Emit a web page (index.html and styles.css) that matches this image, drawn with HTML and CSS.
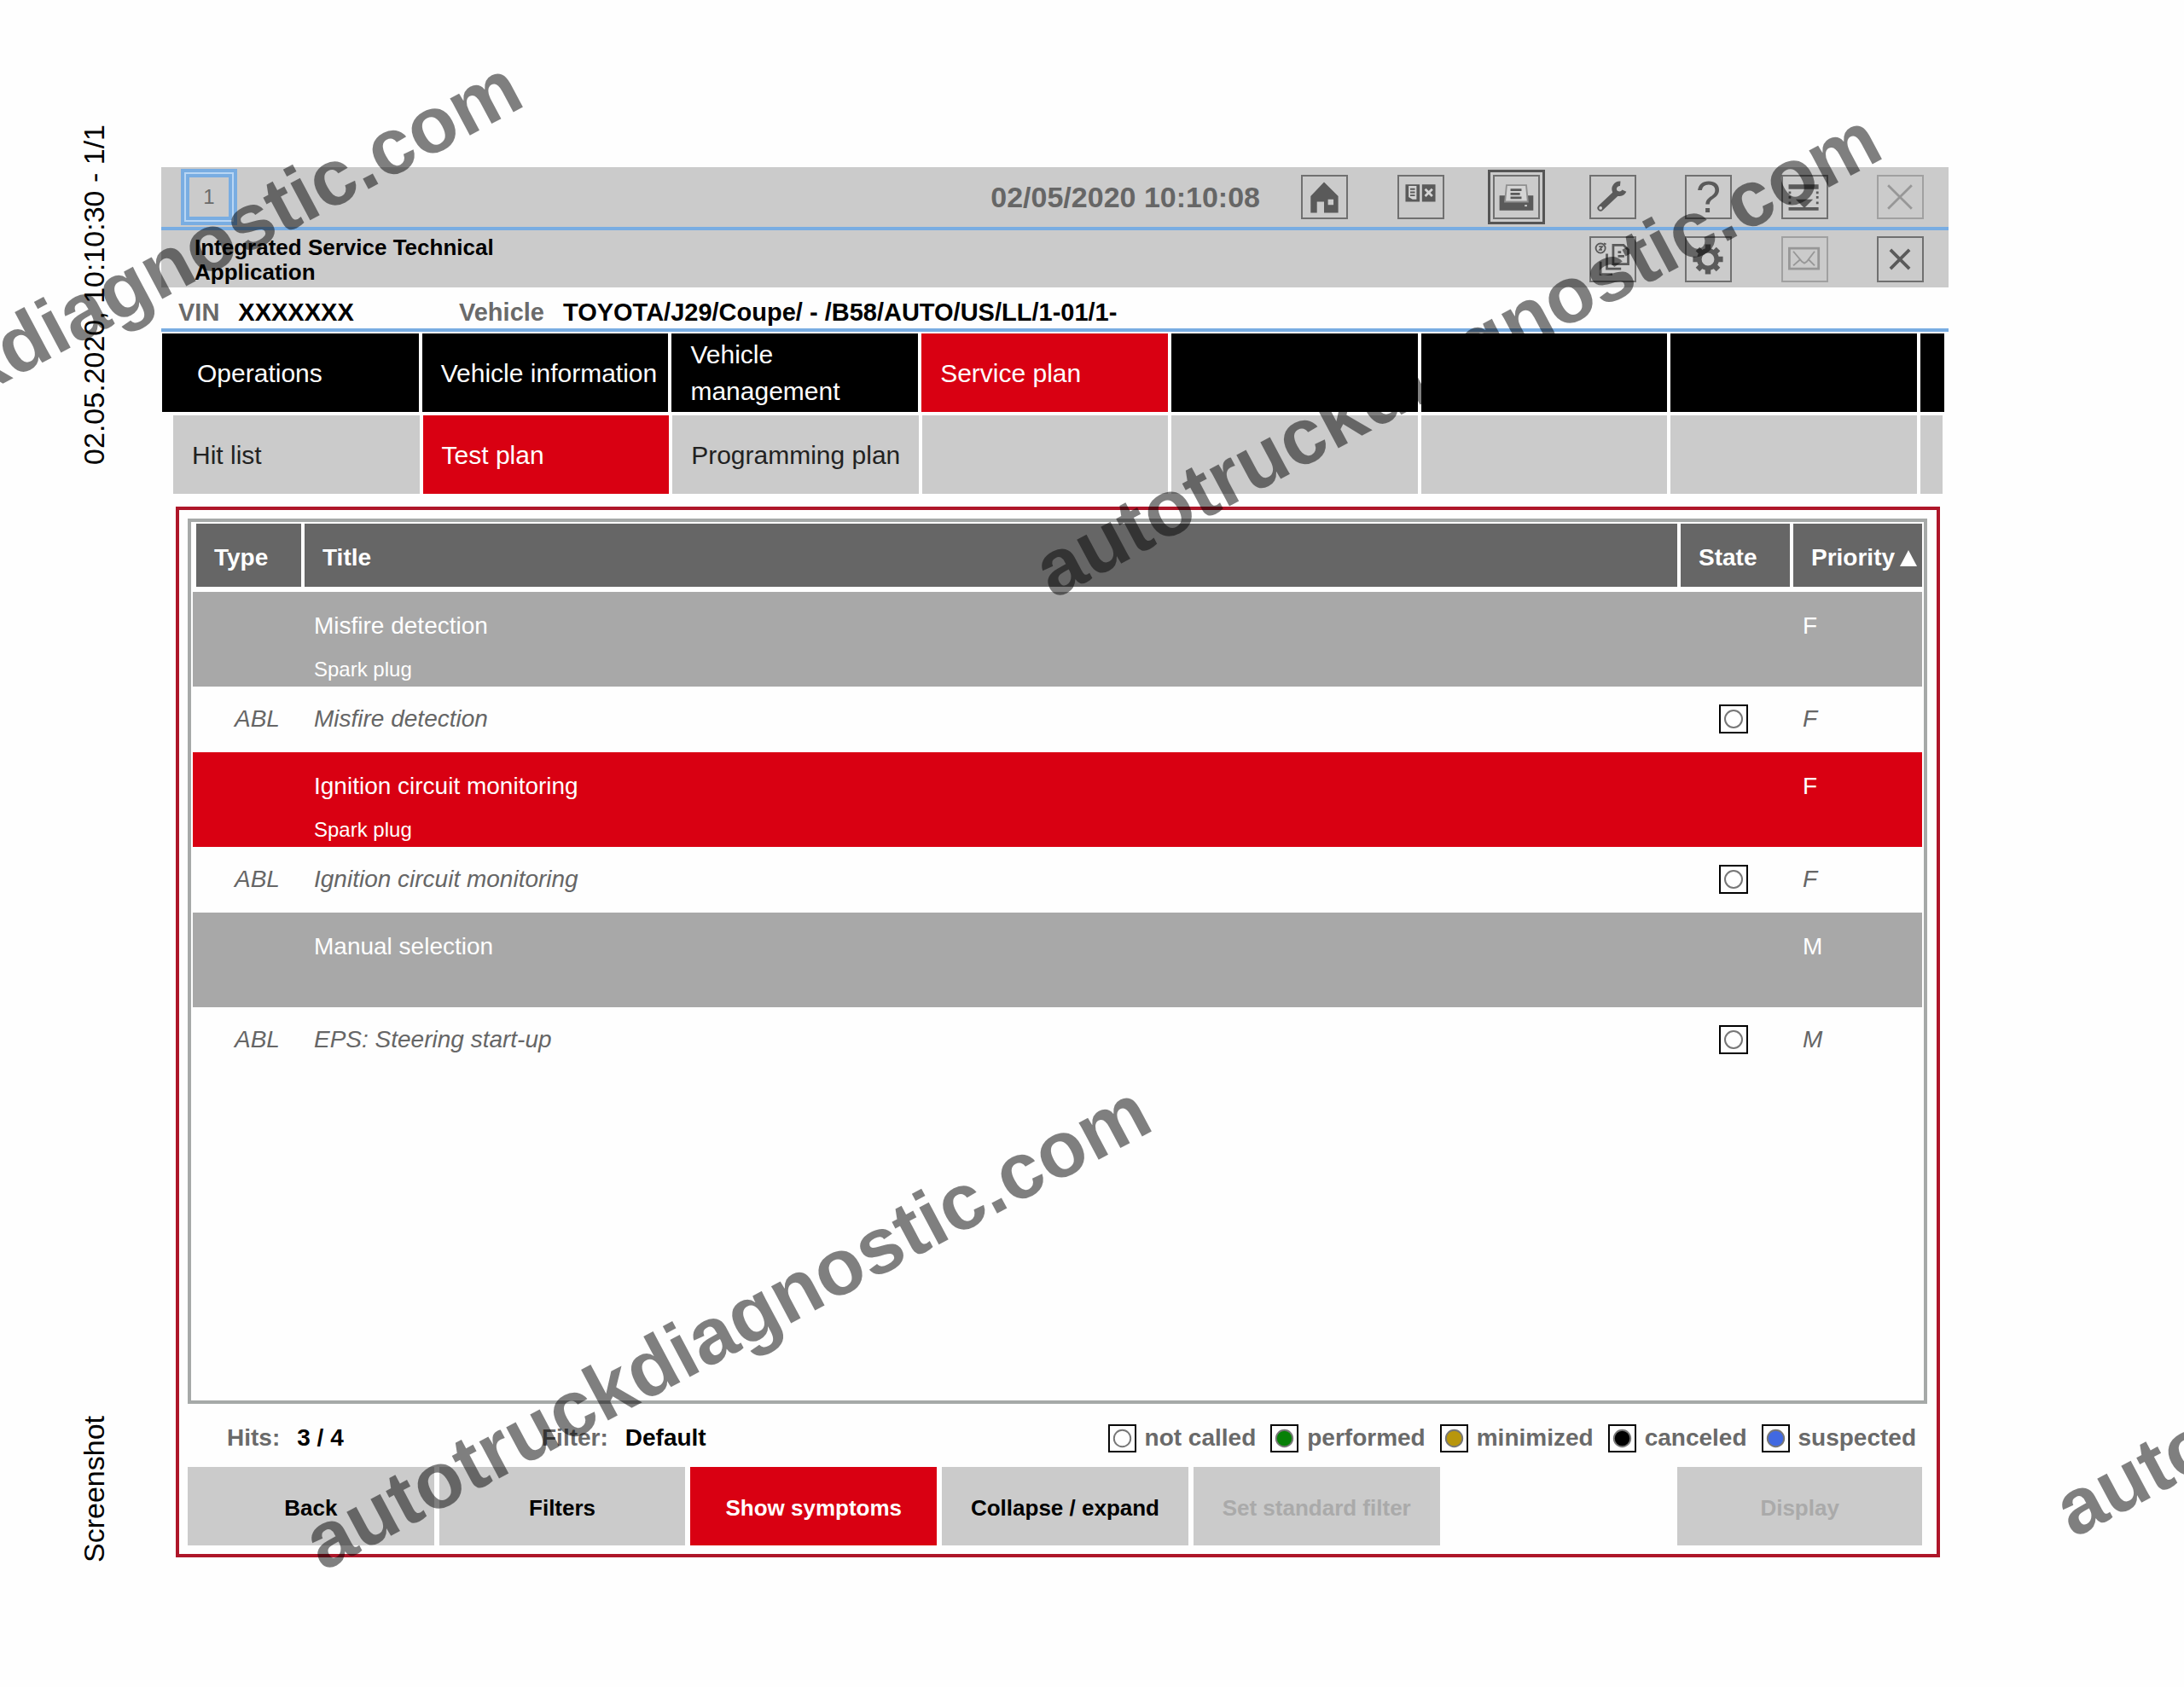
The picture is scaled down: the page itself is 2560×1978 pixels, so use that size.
FILE: index.html
```html
<!DOCTYPE html>
<html lang="en">
<head>
<meta charset="utf-8">
<title>Integrated Service Technical Application</title>
<link rel="stylesheet" href="styles.css">
</head>
<body>
<div class="page">
  <aside class="margin">
    <p class="margin-text">02.05.2020, 10:10:30 - 1/1</p>
    <p class="margin-text">Screenshot</p>
  </aside>

  <main class="app">
    <header class="header">
      <div class="bar bar-top">
        <button class="session" type="button">1</button>
        <time class="clock">02/05/2020 10:10:08</time>
        <div class="tools">
          <button class="tool" type="button" aria-label="Home">
            <svg viewBox="0 0 54 52"><path class="fill" fill-rule="evenodd" d="M27 7 45 25V46H27V32H18V46H10V25ZM32 29V36H39V29Z"/></svg>
          </button>
          <button class="tool" type="button" aria-label="Documents">
            <svg viewBox="0 0 54 52"><path class="fill" d="M8 10H26V32H8ZM29 10H46V32H29Z"/><path class="paper" d="M12 12H22V29H17L12 26Z"/><path class="line thin" d="M14 16H20M14 20H20M14 24H20"/><path class="light-line" d="M33 16 42 25M42 16 33 25"/></svg>
          </button>
          <button class="tool tool-current" type="button" aria-label="Print">
            <svg viewBox="0 0 54 52"><path class="fill" d="M6 24H13V32H42V24H49V43H6Z"/><path class="paper edge" d="M15 11H40L42 32H13Z"/><path class="line" d="M20 17H34M20 22H32M20 27H34"/><path class="paper" d="M38 36H41V38H38Z"/></svg>
          </button>
          <button class="tool" type="button" aria-label="Tools">
            <svg viewBox="0 0 54 52"><path class="line handle" d="M12 40 31 22"/><path class="line jaw" d="M37 9A7 7 0 0 0 30 19 7 7 0 0 0 42 18"/><path class="line jaw" d="M30 20 34 22"/><circle class="paper" cx="12" cy="40" r="2"/></svg>
          </button>
          <button class="tool tool-help" type="button" aria-label="Help">?</button>
          <button class="tool" type="button" aria-label="Minimize">
            <svg viewBox="0 0 54 52"><path class="fill" d="M7 10H45V16H7ZM7 39H45V43H7ZM16 29H38L27 40ZM7 19H10V22H7ZM7 25H10V28H7ZM7 32H10V35H7ZM42 19H45V22H42ZM42 25H45V28H42ZM42 32H45V35H42Z"/></svg>
          </button>
          <button class="tool" type="button" aria-label="Close operation" disabled>
            <svg viewBox="0 0 54 52"><path class="line" d="M12 11 42 41M42 11 12 41"/></svg>
          </button>
        </div>
      </div>
      <div class="bar bar-bottom">
        <h1 class="title">Integrated Service Technical Application</h1>
        <div class="tools tools-short">
          <button class="tool tool-tall" type="button" aria-label="Change view">
            <svg viewBox="0 0 54 54"><circle class="line thin" cx="12" cy="13" r="6"/><path class="line thin" d="M10 11H14L11 15H14M16 7 19 8"/><path class="line" d="M28 9H41L47 15V33H28ZM34 18H38M34 23H42M20 20V39H38M12 30V46H27"/></svg>
          </button>
          <button class="tool tool-tall" type="button" aria-label="Settings">
            <svg viewBox="0 0 54 54"><circle class="line ring" cx="27" cy="27" r="11"/><path class="line tooth" d="M27 14V8M27 40V46M14 27H8M40 27H46M18 18 14 14M36 36 40 40M18 36 14 40M36 18 40 14"/></svg>
          </button>
          <button class="tool tool-tall" type="button" aria-label="Messages" disabled>
            <svg viewBox="0 0 54 54"><path class="line" d="M8 13H45V39H8Z"/><path class="line thin" d="M13 17 24 30 27 32 30 30 40 17M13 35 22 27M40 35 32 27"/></svg>
          </button>
          <button class="tool tool-tall" type="button" aria-label="Close">
            <svg viewBox="0 0 54 54"><path class="line heavy" d="M15 15 39 39M39 15 15 39"/></svg>
          </button>
        </div>
      </div>
    </header>

    <dl class="vehicle">
      <div class="pair pair-vin"><dt>VIN</dt><dd>XXXXXXX</dd></div>
      <div class="pair"><dt>Vehicle</dt><dd>TOYOTA/J29/Coupe/ - /B58/AUTO/US/LL/1-01/1-</dd></div>
    </dl>

    <nav class="tabs tabs-main" aria-label="Main">
      <button class="tab" type="button">Operations</button>
      <button class="tab" type="button">Vehicle information</button>
      <button class="tab" type="button">Vehicle management</button>
      <button class="tab tab-active" type="button">Service plan</button>
      <span class="tab"></span><span class="tab"></span><span class="tab"></span><span class="tab"></span>
    </nav>
    <nav class="tabs tabs-sub" aria-label="Service plan">
      <button class="tab" type="button">Hit list</button>
      <button class="tab tab-active" type="button">Test plan</button>
      <button class="tab" type="button">Programming plan</button>
      <span class="tab"></span><span class="tab"></span><span class="tab"></span><span class="tab"></span><span class="tab"></span>
    </nav>

    <section class="panel">
      <div class="frame">
        <table class="plan">
          <colgroup><col class="col-type"><col><col class="col-state"><col class="col-priority"></colgroup>
          <thead>
            <tr><th>Type</th><th>Title</th><th>State</th><th><span class="sort">Priority<svg class="arrow" viewBox="0 0 20 19"><path d="M10 0 20 19H0Z"/></svg></span></th></tr>
          </thead>
          <tbody>
            <tr class="group"><td></td><td>Misfire detection<small>Spark plug</small></td><td></td><td>F</td></tr>
            <tr class="item"><td>ABL</td><td>Misfire detection</td><td><svg class="state" viewBox="0 0 34 34"><rect x="1" y="1" width="32" height="32"/><circle cx="17" cy="17" r="10"/></svg></td><td>F</td></tr>
            <tr class="group group-active"><td></td><td>Ignition circuit monitoring<small>Spark plug</small></td><td></td><td>F</td></tr>
            <tr class="item"><td>ABL</td><td>Ignition circuit monitoring</td><td><svg class="state" viewBox="0 0 34 34"><rect x="1" y="1" width="32" height="32"/><circle cx="17" cy="17" r="10"/></svg></td><td>F</td></tr>
            <tr class="group"><td></td><td>Manual selection</td><td></td><td>M</td></tr>
            <tr class="item"><td>ABL</td><td>EPS: Steering start-up</td><td><svg class="state" viewBox="0 0 34 34"><rect x="1" y="1" width="32" height="32"/><circle cx="17" cy="17" r="10"/></svg></td><td>M</td></tr>
          </tbody>
        </table>
      </div>

      <div class="status">
        <p class="fact"><span class="label">Hits:</span>3 / 4</p>
        <p class="fact"><span class="label">Filter:</span>Default</p>
        <ul class="legend">
          <li><svg class="state" viewBox="0 0 34 34"><rect x="1" y="1" width="32" height="32"/><circle cx="17" cy="17" r="10"/></svg>not called</li>
          <li><svg class="state performed" viewBox="0 0 34 34"><rect x="1" y="1" width="32" height="32"/><circle cx="17" cy="17" r="10"/></svg>performed</li>
          <li><svg class="state minimized" viewBox="0 0 34 34"><rect x="1" y="1" width="32" height="32"/><circle cx="17" cy="17" r="10"/></svg>minimized</li>
          <li><svg class="state canceled" viewBox="0 0 34 34"><rect x="1" y="1" width="32" height="32"/><circle cx="17" cy="17" r="10"/></svg>canceled</li>
          <li><svg class="state suspected" viewBox="0 0 34 34"><rect x="1" y="1" width="32" height="32"/><circle cx="17" cy="17" r="10"/></svg>suspected</li>
        </ul>
      </div>

      <div class="actions">
        <button class="action" type="button">Back</button>
        <button class="action" type="button">Filters</button>
        <button class="action action-active" type="button">Show symptoms</button>
        <button class="action" type="button">Collapse / expand</button>
        <button class="action" type="button" disabled>Set standard filter</button>
        <button class="action action-last" type="button" disabled>Display</button>
      </div>
    </section>
  </main>

  <div class="watermarks" aria-hidden="true">
    <span class="watermark mark-a">autotruckdiagnostic.com</span>
    <span class="watermark mark-b">autotruckdiagnostic.com</span>
    <span class="watermark mark-c">autotruckdiagnostic.com</span>
    <span class="watermark mark-d">autotruckdiagnostic.com</span>
  </div>
</div>
</body>
</html>
```
FILE: styles.css
```css
:root {
  --red: #d90012;
  --bar: #cbcbcb;
  --dark: #5a5a5a;
  --blue: #79ade2;
  --muted: #6a6a6a;
}

* {
  box-sizing: border-box;
}

body {
  margin: 0;
  background: #fefefe;
  color: #000;
  font-family: "Liberation Sans", Arial, sans-serif;
  font-size: 28px;
}

button {
  margin: 0;
  padding: 0;
  border: 0;
  background: none;
  color: inherit;
  font: inherit;
}

p, h1, dl, dd, ul {
  margin: 0;
  padding: 0;
}

.page {
  position: relative;
  display: grid;
  grid-template-columns: 189px minmax(0, 1fr);
  min-height: 100vh;
  padding-right: 276px;
}

/* Printed page margin */
.margin {
  display: flex;
  flex-direction: column;
  justify-content: space-between;
  align-items: flex-start;
  padding: 146px 0 146px 90px;
}

.margin-text {
  writing-mode: vertical-rl;
  transform: rotate(180deg);
  font-size: 34px;
  line-height: 40px;
  white-space: nowrap;
}

.app {
  display: flex;
  flex-direction: column;
  padding: 196px 0 152px;
}

/* Header */
.bar {
  display: flex;
  align-items: center;
  padding-right: 29px;
  background: var(--bar);
}

.bar-top {
  height: 74px;
  padding-left: 23px;
  border-bottom: 4px solid var(--blue);
}

.bar-bottom {
  justify-content: space-between;
  height: 67px;
  padding-left: 39px;
}

.session {
  width: 66px;
  height: 66px;
  border: 4px solid var(--blue);
  box-shadow: inset 0 0 0 2px #b9d6f4, inset 0 0 0 6px var(--blue);
  color: var(--muted);
  font-size: 24px;
}

.clock {
  margin-left: auto;
  margin-right: 48px;
  color: #666;
  font-size: 34px;
  font-weight: bold;
}

.tools {
  display: flex;
  justify-content: space-between;
  width: 730px;
}

.tools-short {
  width: 392px;
}

.tool {
  width: 55px;
  height: 52px;
  border: 2px solid #707070;
  color: var(--dark);
}

.tool-tall {
  height: 54px;
}

.tool svg {
  display: block;
  width: 54px;
  height: 100%;
  margin: 0 -2px;
  overflow: visible;
}

.tool:disabled {
  border-color: #a0a0a0;
  color: #979797;
}

.tool-current {
  outline: 3px solid #555;
  outline-offset: 3px;
}

.tool-help {
  font-size: 52px;
  line-height: 48px;
}

.fill {
  fill: currentColor;
}

.line {
  fill: none;
  stroke: currentColor;
  stroke-width: 3;
}

.thin {
  stroke-width: 2;
}

.heavy {
  stroke-width: 4;
}

.handle {
  stroke-width: 8;
  stroke-linecap: round;
}

.jaw {
  stroke-width: 6;
}

.ring {
  stroke-width: 6;
}

.tooth {
  stroke-width: 7;
}

.paper {
  fill: #d4d4d4;
}

.edge {
  stroke: #909090;
  stroke-width: 2;
}

.light-line {
  fill: none;
  stroke: #d4d4d4;
  stroke-width: 3;
}

.title {
  width: 400px;
  padding-top: 2px;
  font-size: 26px;
  line-height: 29px;
}

/* Vehicle identification */
.vehicle {
  display: flex;
  height: 52px;
  padding: 11px 0 0 20px;
  border-bottom: 4px solid var(--blue);
  font-size: 29px;
  font-weight: bold;
  line-height: 37px;
}

.pair {
  display: flex;
  gap: 22px;
}

.pair-vin {
  width: 329px;
}

.pair dt {
  color: var(--muted);
}

/* Tabs */
.tabs {
  display: grid;
  gap: 4px;
  height: 92px;
}

.tabs-main {
  grid-template-columns: 301fr repeat(6, minmax(0, 289fr)) 28fr;
  margin: 2px 5px 4px 1px;
}

.tabs-sub {
  grid-template-columns: repeat(7, minmax(0, 289fr)) 26fr;
  margin: 0 7px 15px 14px;
}

.tab {
  padding-left: 22px;
  background: #000;
  color: #fff;
  font-size: 30px;
  line-height: 43px;
  text-align: left;
}

.tabs-main .tab:first-child {
  padding-left: 41px;
}

.tabs-sub .tab {
  background: var(--bar);
  color: #222;
}

.tabs .tab-active {
  background: var(--red);
  color: #fff;
}

/* Panel */
.panel {
  display: flex;
  flex: 1;
  flex-direction: column;
  margin: 0 10px 0 17px;
  padding: 10px 0;
  border: 4px solid #ae1629;
}

.frame {
  flex: 1;
  margin: 0 11px 0 10px;
  padding: 2px;
  border: 4px solid #a6a9a8;
}

.plan {
  width: 100%;
  border-spacing: 0;
  table-layout: fixed;
}

.col-type {
  width: 131px;
}

.col-state {
  width: 132px;
}

.col-priority {
  width: 151px;
}

.plan th {
  height: 80px;
  padding: 6px 0 0 21px;
  border-right: 4px solid #fefefe;
  border-bottom: 6px solid #fefefe;
  background: #666;
  color: #fff;
  text-align: left;
}

.plan th:first-child {
  border-left: 4px solid #fefefe;
}

.plan th:last-child {
  border-right: 0;
}

.sort {
  display: flex;
  align-items: center;
  gap: 6px;
}

.arrow {
  width: 20px;
  height: 19px;
  fill: #fff;
}

.plan td {
  padding: 0 0 0 11px;
  line-height: 32px;
}

.group td {
  height: 111px;
  padding-top: 24px;
  background: #a8a8a8;
  color: #fff;
  vertical-align: top;
}

.group-active td {
  background: var(--red);
}

.group small {
  display: block;
  margin-top: 19px;
  font-size: 24px;
}

.item td {
  height: 77px;
  padding-bottom: 2px;
  color: #666;
  font-style: italic;
}

.item td:first-child {
  padding-left: 49px;
}

.item td:nth-child(3) {
  padding-left: 45px;
}

.state {
  display: block;
  width: 34px;
  height: 34px;
}

.state rect {
  fill: #fff;
  stroke: #000;
  stroke-width: 2;
}

.state circle {
  fill: #fff;
  stroke: #777;
  stroke-width: 2;
}

.state.performed circle {
  fill: #078007;
}

.state.minimized circle {
  fill: #b8960c;
}

.state.canceled circle {
  fill: #000;
}

.state.suspected circle {
  fill: #4169e1;
}

/* Status line and actions */
.status {
  display: grid;
  grid-template-columns: 369px 1fr auto;
  align-items: center;
  height: 74px;
  padding: 6px 24px 0 56px;
  font-weight: bold;
}

.fact {
  display: flex;
  gap: 20px;
}

.label {
  color: var(--muted);
}

.legend {
  display: flex;
  gap: 17px;
  color: var(--muted);
  list-style: none;
}

.legend li {
  display: flex;
  align-items: center;
  gap: 10px;
}

.legend .state {
  width: 33px;
  height: 33px;
}

.actions {
  display: grid;
  grid-template-columns: repeat(5, 289fr) 267fr 287fr;
  gap: 6px;
  height: 92px;
  margin: 0 17px 0 10px;
}

.action {
  padding-top: 4px;
  background: var(--bar);
  font-size: 26px;
  font-weight: bold;
}

.action:disabled {
  color: #aaa;
}

.action-active {
  background: var(--red);
  color: #fff;
}

.action-last {
  grid-column: 7;
}

/* Watermarks lie over everything */
.watermarks {
  position: absolute;
  inset: 0;
  overflow: hidden;
  pointer-events: none;
}

.watermark {
  position: absolute;
  transform: rotate(-28deg);
  transform-origin: 0 79px;
  color: rgba(0, 0, 0, 0.5);
  font-size: 93px;
  font-weight: bold;
  line-height: 93px;
}

.mark-a {
  left: -358px;
  top: 564px;
}

.mark-b {
  left: 1235px;
  top: 625px;
}

.mark-c {
  left: 379px;
  top: 1765px;
}

.mark-d {
  left: 2431px;
  top: 1726px;
}
```
